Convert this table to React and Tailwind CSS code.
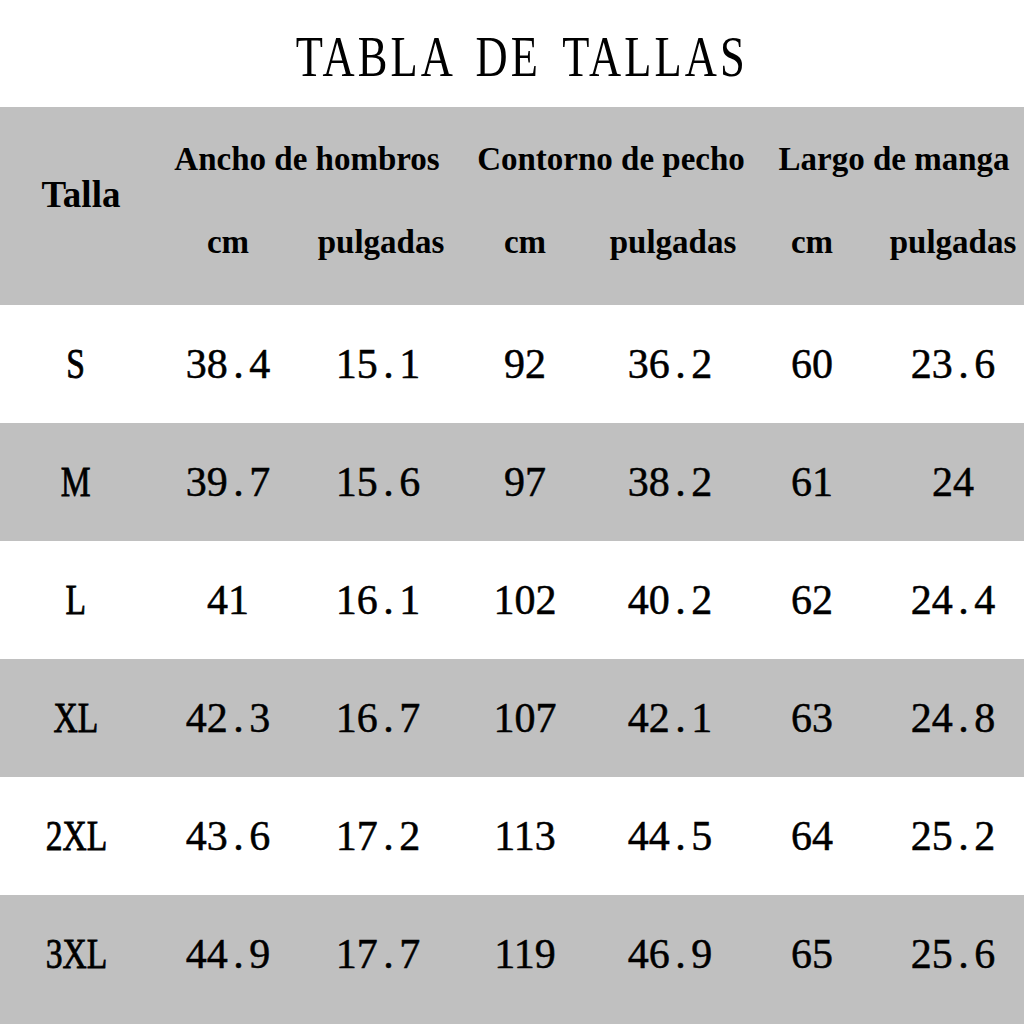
import React from "react";

const serif = { fontFamily: '"Liberation Serif", "Times New Roman", serif' };

function Num({ text }) {
  const parts = text.split(".");
  if (parts.length === 1) return <span className="leading-none">{text}</span>;
  return (
    <span className="inline-flex leading-none">
      <span>{parts[0]}</span>
      <span className="mx-[0.13em]">.</span>
      <span>{parts[1]}</span>
    </span>
  );
}

const rows = [
  ["S", "38.4", "15.1", "92", "36.2", "60", "23.6"],
  ["M", "39.7", "15.6", "97", "38.2", "61", "24"],
  ["L", "41", "16.1", "102", "40.2", "62", "24.4"],
  ["XL", "42.3", "16.7", "107", "42.1", "63", "24.8"],
  ["2XL", "43.6", "17.2", "113", "44.5", "64", "25.2"],
  ["3XL", "44.9", "17.7", "119", "46.9", "65", "25.6"],
];

const cols = "grid grid-cols-[152px_152px_148px_146px_144px_140px_142px]";

export default function App() {
  return (
    <div className="min-h-screen w-[1024px] flex flex-col bg-white text-black" style={serif}>
      <div className="h-[107px] flex items-center justify-center pt-[5px] pl-[20px]">
        <span className="inline-block text-[57px] leading-none tracking-[4px] [word-spacing:10px] scale-x-[0.78] whitespace-nowrap">
          TABLA DE TALLAS
        </span>
      </div>

      <div className={cols + " grid-rows-[98px_100px] bg-[#c0c0c0] font-bold leading-none"}>
        <div className="row-span-2 flex items-center justify-center pb-[23px] pl-[10px] text-[37px]">Talla</div>
        <div className="col-span-2 flex items-center justify-center pt-[6px] pl-[10px] text-[33px] whitespace-nowrap">Ancho de hombros</div>
        <div className="col-span-2 flex items-center justify-center pt-[6px] pl-[28px] text-[33px] whitespace-nowrap">Contorno de pecho</div>
        <div className="col-span-2 flex items-center justify-center pt-[6px] pl-[22px] text-[33px] whitespace-nowrap">Largo de manga</div>
        <div className="flex items-center justify-center pb-[26px] text-[33px]">cm</div>
        <div className="flex items-center justify-center pb-[26px] pl-[6px] text-[33px]">pulgadas</div>
        <div className="flex items-center justify-center pb-[26px] text-[33px]">cm</div>
        <div className="flex items-center justify-center pb-[26px] pl-[6px] text-[33px]">pulgadas</div>
        <div className="flex items-center justify-center pb-[26px] text-[33px]">cm</div>
        <div className="flex items-center justify-center pb-[26px] text-[33px]">pulgadas</div>
      </div>

      {rows.map((r, ri) => (
        <div
          key={ri}
          className={
            cols +
            " h-[118px] text-[42px] [-webkit-text-stroke:0.5px_#000] " +
            (ri % 2 === 1 ? "bg-[#c0c0c0]" : "bg-white")
          }
        >
          <div className="flex items-center justify-center">
            <span className="inline-block leading-none scale-x-[0.8] whitespace-nowrap [-webkit-text-stroke:0.8px_#000]">{r[0]}</span>
          </div>
          {r.slice(1).map((v, ci) => (
            <div key={ci} className="flex items-center justify-center">
              <Num text={v} />
            </div>
          ))}
        </div>
      ))}
      <div className="flex-1 bg-[#c0c0c0]" />
    </div>
  );
}
